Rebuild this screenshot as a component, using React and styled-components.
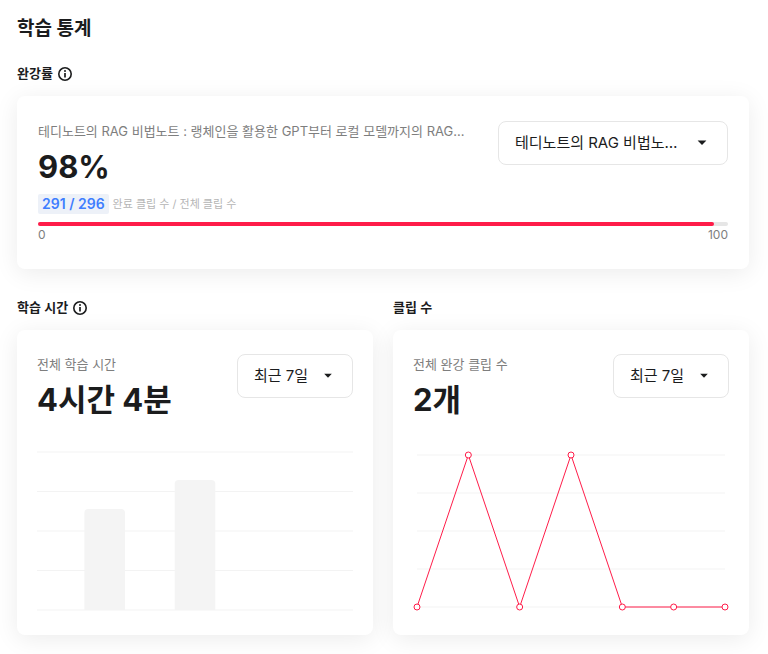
import React, { useId } from 'react'
import styled, { createGlobalStyle } from 'styled-components'

const GlobalStyle = createGlobalStyle`
  *,
  *::before,
  *::after {
    box-sizing: border-box;
  }
  body {
    margin: 0;
    background: #fff;
    color: #1b1c1d;
    font-family: Inter, 'Noto Sans CJK KR', sans-serif;
    font-size: 13px;
    line-height: 20px;
  }
  h1, h2, p {
    margin: 0;
  }
`

const course = '테디노트의 RAG 비법노트 : 랭체인을 활용한 GPT부터 로컬 모델까지의 RAG...'

const studyTime = [0, 101, 0, 130, 0, 0, 0]
const clips = [0, 1, 0, 1, 0, 0, 0]

const InfoIcon = () => (
  <svg width='16' height='16' viewBox='0 0 16 16' fill='none' role='img' aria-label='안내'>
    <circle cx='8' cy='8' r='6.2' stroke='#1b1c1d' strokeWidth='1.6' />
    <path d='M8 7v4.6' stroke='#1b1c1d' strokeWidth='1.7' />
    <circle cx='8' cy='5.1' r='1' fill='#1b1c1d' />
  </svg>
)

const Dropdown = ({ label, options, wide }) => {
  const id = useId()
  return (
    <SelectBox $wide={wide}>
      <select id={id} aria-label={label}>
        {options.map((option) => (
          <option key={option}>{option}</option>
        ))}
      </select>
      <svg width='10' height='6' viewBox='0 0 10 6' aria-hidden='true'>
        <path d={wide ? 'M.6 .5h8.8L5 5z' : 'M1.2 .8h7.6L5 4.8z'} fill='#1b1c1d' />
      </svg>
    </SelectBox>
  )
}

const BarChart = ({ data }) => {
  const step = 316 / data.length
  return (
    <Chart viewBox='0 0 316 170' role='img' aria-label='학습 시간 차트'>
      {[0, 1, 2, 3, 4].map((i) => (
        <line key={i} x1='0' x2='316' y1={7 + i * 39.5} y2={7 + i * 39.5} stroke='#f3f3f3' />
      ))}
      {data.map((value, i) => {
        if (!value) return null
        const x = i * step + step * 0.05
        const top = 165 - value
        return (
          <path
            key={i}
            d={`M${x} 165V${top + 4}q0-4 4-4h${step * 0.9 - 8}q4 0 4 4V165z`}
            fill='#f4f4f4'
          />
        )
      })}
    </Chart>
  )
}

const LineChart = ({ data }) => {
  const points = data.map((value, i) => [4 + (i * 308) / 6, 162 - value * 152])
  return (
    <Chart viewBox='0 0 316 170' role='img' aria-label='클립 수 차트'>
      {[0, 1, 2, 3, 4].map((i) => (
        <line key={i} x1='4' x2='312' y1={10 + i * 38} y2={10 + i * 38} stroke='#f3f3f3' />
      ))}
      <polyline points={points.join(' ')} fill='none' stroke='#ff1c49' />
      {points.map(([x, y]) => (
        <circle key={x} cx={x} cy={y} r='3' fill='#fff' stroke='#ff1c49' />
      ))}
    </Chart>
  )
}

const App = () => {
  return (
    <Page>
      <GlobalStyle />
      <Title>학습 통계</Title>
      <section>
        <SectionTitle>
          완강률 <InfoIcon />
        </SectionTitle>
        <RateCard>
          <CardTop>
            <Summary>
              <Caption>{course}</Caption>
              <Value>98%</Value>
            </Summary>
            <Dropdown wide label='강의 선택' options={[course]} />
          </CardTop>
          <Count>
            <Badge>291 / 296</Badge>
            <span>완료 클립 수 / 전체 클립 수</span>
          </Count>
          <Track role='progressbar' aria-label='완강률' aria-valuenow={98}>
            <Fill style={{ width: '98%' }} />
          </Track>
          <Scale>
            <span>0</span>
            <span>100</span>
          </Scale>
        </RateCard>
      </section>
      <Columns>
        <section>
          <SectionTitle>
            학습 시간 <InfoIcon />
          </SectionTitle>
          <ChartCard>
            <CardTop>
              <Summary>
                <Caption>전체 학습 시간</Caption>
                <Value>4시간 4분</Value>
              </Summary>
              <Dropdown label='학습 시간 기간' options={['최근 7일']} />
            </CardTop>
            <BarChart data={studyTime} />
          </ChartCard>
        </section>
        <section>
          <SectionTitle>클립 수</SectionTitle>
          <ChartCard>
            <CardTop>
              <Summary>
                <Caption>전체 완강 클립 수</Caption>
                <Value>2개</Value>
              </Summary>
              <Dropdown label='클립 수 기간' options={['최근 7일']} />
            </CardTop>
            <LineChart data={clips} />
          </ChartCard>
        </section>
      </Columns>
    </Page>
  )
}

const Page = styled.main`
  padding: 15px 19px 19px 17px;
`

const Title = styled.h1`
  margin-bottom: 21px;
  font-size: 19px;
  font-weight: 700;
  line-height: 28px;
`

const SectionTitle = styled.h2`
  display: flex;
  align-items: flex-end;
  gap: 4px;
  margin-bottom: 14px;
  font-size: 13px;
  font-weight: 600;
  line-height: 18px;
`

const Card = styled.div`
  border-radius: 8px;
  background: #fff;
  box-shadow: 0 4px 24px rgba(0, 0, 0, 0.08);
`

const RateCard = styled(Card)`
  padding: 25px 21px;
`

const ChartCard = styled(Card)`
  padding: 24px 20px 20px;
`

const Columns = styled.div`
  display: grid;
  grid-template-columns: 1fr 1fr;
  gap: 20px;
  margin-top: 29px;
`

const CardTop = styled.div`
  display: flex;
  align-items: flex-start;
  justify-content: space-between;
  gap: 8px;
`

const Summary = styled.div`
  min-width: 0;
`

const Caption = styled.p`
  overflow: hidden;
  color: #7e7e7e;
  text-overflow: ellipsis;
  white-space: nowrap;
`

const Value = styled.p`
  margin-top: 5px;
  font-size: 31px;
  font-weight: 700;
  line-height: 42px;
  white-space: nowrap;
`

const SelectBox = styled.div`
  display: grid;
  flex: none;
  align-items: center;
  width: ${({ $wide }) => ($wide ? '230px' : '116px')};

  select,
  svg {
    grid-area: 1 / 1;
  }
  select {
    width: 100%;
    height: 44px;
    padding: 0 ${({ $wide }) => ($wide ? '48px' : '40px')} 0 16px;
    border: 1px solid #e6e6e6;
    border-radius: 8px;
    background: #fff;
    color: #1b1c1d;
    font: inherit;
    font-size: 15px;
    appearance: none;
    text-overflow: ellipsis;
    cursor: pointer;
  }
  svg {
    justify-self: end;
    margin-right: ${({ $wide }) => ($wide ? '21px' : '20px')};
    pointer-events: none;
  }
`

const Count = styled.div`
  display: flex;
  align-items: center;
  gap: 4px;
  margin-top: 6px;
  color: #b5b5b5;
  font-size: 11px;
`

const Badge = styled.strong`
  padding: 0 4px;
  border-radius: 2px;
  background: #edf1f8;
  color: #3e7eff;
  font-size: 14px;
  font-weight: 600;
`

const Track = styled.div`
  height: 4px;
  margin-top: 8px;
  border-radius: 2px;
  background: #e6e6e6;
`

const Fill = styled.div`
  height: 100%;
  border-radius: 2px;
  background: #ff1c49;
`

const Scale = styled.div`
  display: flex;
  justify-content: space-between;
  color: #7e7e7e;
  font-size: 12px;
  line-height: 18px;
`

const Chart = styled.svg`
  display: block;
  width: 100%;
  margin-top: 24px;
  overflow: visible;
`

export default App
